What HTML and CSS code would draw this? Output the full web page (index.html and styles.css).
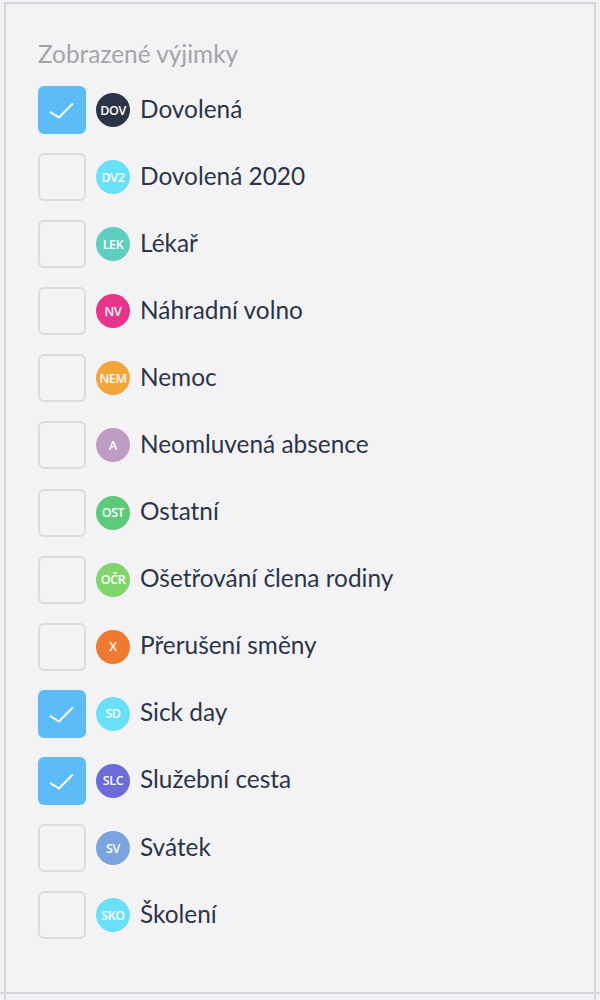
FILE: index.html
```html
<!DOCTYPE html>
<html lang="cs">
<head>
<meta charset="utf-8">
<link rel="stylesheet" href="styles.css">
</head>
<body>
<div class="frame">
  <div class="panel">
    <div class="heading">Zobrazené výjimky</div>
    <ul class="list">
      <li class="row"><span class="box checked"><svg viewBox="0 0 48 48"><path d="M12.7 26.3 L21 31.5 L34.3 18"/></svg></span><span class="avatar" style="background:#2e3447">DOV</span><span class="label">Dovolená</span></li>
      <li class="row"><span class="box"></span><span class="avatar" style="background:#67e0f8">DV2</span><span class="label">Dovolená 2020</span></li>
      <li class="row"><span class="box"></span><span class="avatar" style="background:#5ecfbf">LEK</span><span class="label">Lékař</span></li>
      <li class="row"><span class="box"></span><span class="avatar" style="background:#e8348a">NV</span><span class="label">Náhradní volno</span></li>
      <li class="row"><span class="box"></span><span class="avatar" style="background:#f3a53a">NEM</span><span class="label">Nemoc</span></li>
      <li class="row"><span class="box"></span><span class="avatar" style="background:#bf9cc3">A</span><span class="label">Neomluvená absence</span></li>
      <li class="row"><span class="box"></span><span class="avatar" style="background:#5dc97a">OST</span><span class="label">Ostatní</span></li>
      <li class="row"><span class="box"></span><span class="avatar" style="background:#80d66c">OČR</span><span class="label">Ošetřování člena rodiny</span></li>
      <li class="row"><span class="box"></span><span class="avatar" style="background:#ef7a2f">X</span><span class="label">Přerušení směny</span></li>
      <li class="row"><span class="box checked"><svg viewBox="0 0 48 48"><path d="M12.7 26.3 L21 31.5 L34.3 18"/></svg></span><span class="avatar" style="background:#6ae0f8">SD</span><span class="label">Sick day</span></li>
      <li class="row"><span class="box checked"><svg viewBox="0 0 48 48"><path d="M12.7 26.3 L21 31.5 L34.3 18"/></svg></span><span class="avatar" style="background:#6b6bdc">SLC</span><span class="label">Služební cesta</span></li>
      <li class="row"><span class="box"></span><span class="avatar" style="background:#7aa3e0">SV</span><span class="label">Svátek</span></li>
      <li class="row"><span class="box"></span><span class="avatar" style="background:#6ae0f8">SKO</span><span class="label">Školení</span></li>
    </ul>
  </div>
</div>
<div class="divider"></div>
<div class="below"></div>
</body>
</html>
```

FILE: styles.css
```css
html, body {
  margin: 0;
  padding: 0;
  background: #f3f3f5;
  font-family: Lato, "Noto Sans", sans-serif;
}
.frame {
  margin: 2px 4px 0 4px;
  border-top: 2px solid #d6d6da;
  border-left: 2px solid #d6d6da;
  border-right: 2px solid #d6d6da;
  height: 988px;
  box-sizing: content-box;
}
.panel {
  padding: 34px 0 0 32px;
}
.heading {
  font-size: 24.4px;
  line-height: 32px;
  color: #a3a3a8;
  margin-bottom: 16px;
}
.list {
  list-style: none;
  margin: 0;
  padding: 0;
  display: flex;
  flex-direction: column;
  gap: 19.1px;
}
.row {
  display: flex;
  align-items: center;
  height: 48px;
}
.box {
  width: 48px;
  height: 48px;
  box-sizing: border-box;
  border: 2px solid #dcdcdf;
  border-radius: 6px;
  flex: none;
}
.box.checked {
  background: #5bbcf7;
  border-color: #5bbcf7;
}
.box svg {
  display: block;
  width: 48px;
  height: 48px;
  margin: -2px;
}
.box svg path {
  fill: none;
  stroke: #fff;
  stroke-width: 2;
  stroke-linecap: round;
  stroke-linejoin: round;
}
.avatar {
  width: 34px;
  height: 34px;
  border-radius: 50%;
  margin-left: 10px;
  flex: none;
  display: flex;
  align-items: center;
  justify-content: center;
  color: #fff;
  font-size: 12.5px;
  font-weight: 600;
  font-family: "Open Sans", "Noto Sans", sans-serif;
  letter-spacing: -0.4px;
}
.label {
  margin-left: 10px;
  font-size: 24.4px;
  color: #2c3447;
  line-height: 30px;
  padding-bottom: 3px;
}
.divider {
  height: 2px;
  background: #d6d6da;
}
.below {
  margin: 0 4px;
  height: 6px;
  border-left: 2px solid #d6d6da;
  border-right: 2px solid #d6d6da;
}
```
